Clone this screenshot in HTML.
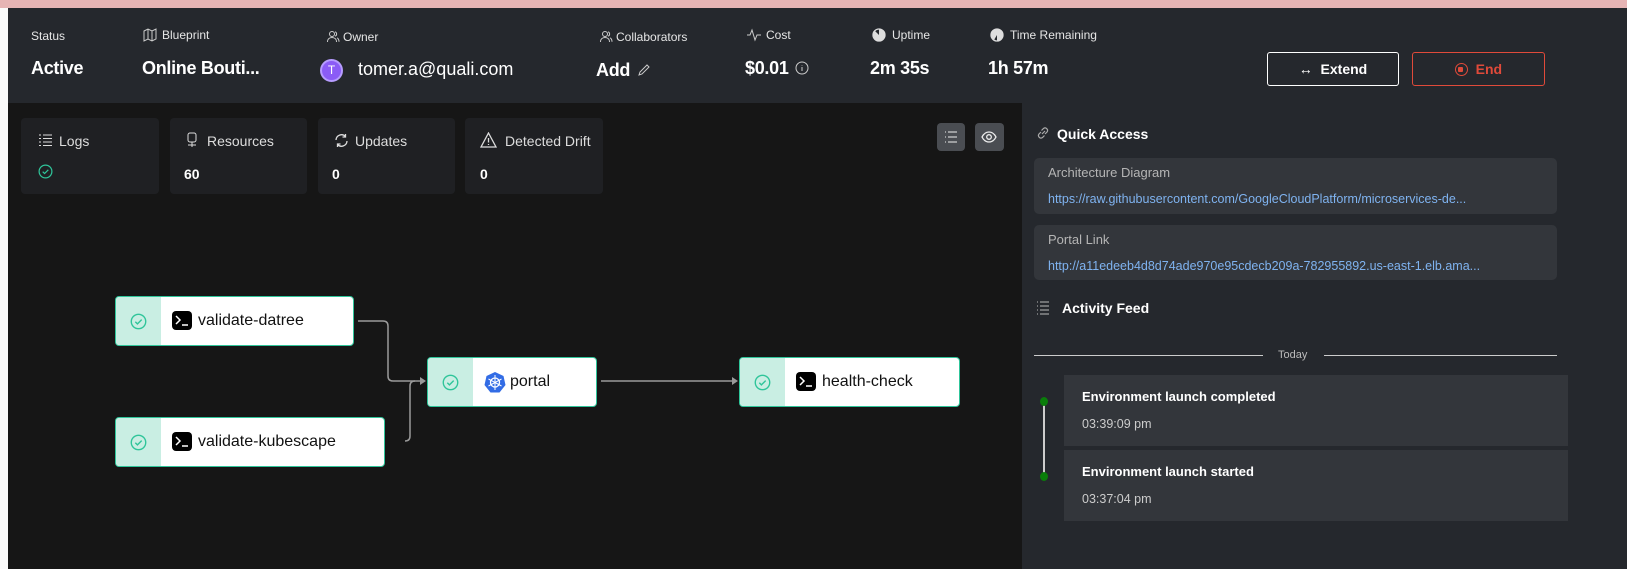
<!DOCTYPE html>
<html><head><meta charset="utf-8"><style>
*{margin:0;padding:0;box-sizing:border-box}
body{width:1627px;height:569px;overflow:hidden;background:#fafafa;font-family:"Liberation Sans",sans-serif;position:relative;color:#fff}
.a{position:absolute}
.lbl{font-size:12px;color:#e6e6e6;white-space:nowrap}
.val{font-size:18px;font-weight:bold;white-space:nowrap;letter-spacing:-0.3px}
.card{background:#1f2023;border-radius:4px}
.ct{font-size:14px;color:#ddd}
.cv{font-size:14px;font-weight:bold}
.qa{background:#33363b;border-radius:5px}
.qt{font-size:13px;color:#b5b5b5}
.ql{font-size:12.5px;color:#7fb3f0;white-space:nowrap}
.node{position:absolute;height:50px;background:#fff;border:1.5px solid #2fc59a;border-radius:4px;overflow:hidden}
.node .l{position:absolute;left:0;top:0;bottom:0;width:45px;background:#c9eee3}
.node .t{position:absolute;left:82px;top:0;line-height:47px;font-size:16px;color:#111}
.term{position:absolute;left:56px;top:14px;width:20px;height:19px;background:#000;border-radius:4px}
.fi{background:#33363b}
</style></head><body>
<div class="a" style="left:0;top:0;width:1627px;height:8px;background:#e6b4b4"></div>
<div class="a" style="left:8px;top:8px;width:1619px;height:95px;background:#25282d"></div>
<svg width="0" height="0" style="position:absolute"><defs>
<symbol id="chk" viewBox="0 0 16 16"><circle cx="8" cy="8" r="6.8" fill="none" stroke="#2fc59a" stroke-width="1.3"/><path d="M5 8.2l2 2 4-4" fill="none" stroke="#2fc59a" stroke-width="1.3"/></symbol>
<symbol id="usr" viewBox="0 0 14 14"><circle cx="6" cy="4" r="2.5" fill="none" stroke="#ccc"/><path d="M1.5 12c0-3 2-4.5 4.5-4.5S10.5 9 10.5 12M9 1.8a2.3 2.3 0 010 4.4M11 7.8c1.2.6 2 2 2 4" fill="none" stroke="#ccc"/></symbol>
</defs></svg>
<div class="a lbl" style="left:31px;top:29px">Status</div>
<div class="a val" style="left:31px;top:58px">Active</div>
<svg class="a" style="left:143px;top:28px" width="14" height="14" viewBox="0 0 14 14"><path d="M1 3l4-2 4 2 4-2v10l-4 2-4-2-4 2z M5 1v10 M9 3v10" fill="none" stroke="#ccc"/></svg>
<div class="a lbl" style="left:162px;top:28px">Blueprint</div>
<div class="a val" style="left:142px;top:58px">Online Bouti...</div>
<svg class="a" style="left:326px;top:30px" width="14" height="14"><use href="#usr"/></svg>
<div class="a lbl" style="left:343px;top:30px">Owner</div>
<div class="a" style="left:320px;top:59px;width:23px;height:23px;border-radius:50%;background:#8b5cf6;border:2px solid #b69cff;font-size:12px;text-align:center;line-height:19px">T</div>
<div class="a" style="left:358px;top:59px;font-size:18px;white-space:nowrap">tomer.a@quali.com</div>
<svg class="a" style="left:599px;top:30px" width="14" height="14"><use href="#usr"/></svg>
<div class="a lbl" style="left:616px;top:30px">Collaborators</div>
<div class="a val" style="left:596px;top:60px">Add</div>
<svg class="a" style="left:637px;top:63px" width="14" height="14" viewBox="0 0 14 14"><path d="M2 12l1-3 7-7 2 2-7 7z" fill="none" stroke="#ccc"/></svg>
<svg class="a" style="left:747px;top:28px" width="14" height="14" viewBox="0 0 14 14"><path d="M0 7h3l2-5 3 10 2-5h4" fill="none" stroke="#ccc"/></svg>
<div class="a lbl" style="left:766px;top:28px">Cost</div>
<div class="a val" style="left:745px;top:58px">$0.01</div>
<svg class="a" style="left:795px;top:61px" width="14" height="14" viewBox="0 0 14 14"><circle cx="7" cy="7" r="6" fill="none" stroke="#ccc"/><path d="M7 6v4M7 4v.5" stroke="#ccc"/></svg>
<svg class="a" style="left:872px;top:28px" width="14" height="14" viewBox="0 0 14 14"><circle cx="7" cy="7" r="6" fill="none" stroke="#ddd" stroke-width="1.3"/><path d="M7 1a6 6 0 010 12 6 6 0 01-4-10L7 7z" fill="#ddd"/></svg>
<div class="a lbl" style="left:892px;top:28px">Uptime</div>
<div class="a val" style="left:870px;top:58px">2m 35s</div>
<svg class="a" style="left:990px;top:28px" width="14" height="14" viewBox="0 0 14 14"><circle cx="7" cy="7" r="6" fill="none" stroke="#ddd" stroke-width="1.3"/><path d="M7 1a6 6 0 010 12z" fill="#ddd"/><path d="M7 1a6 6 0 00-3 11L7 7z" fill="#ddd"/></svg>
<div class="a lbl" style="left:1010px;top:28px">Time Remaining</div>
<div class="a val" style="left:988px;top:58px">1h 57m</div>
<div class="a" style="left:1267px;top:52px;width:132px;height:34px;border:1px solid #fff;border-radius:3px;font-size:14px;font-weight:bold;text-align:center;line-height:32px">↔&nbsp; Extend</div>
<div class="a" style="left:1412px;top:52px;width:133px;height:34px;border:1px solid #e04a3a;border-radius:3px;font-size:14px;font-weight:bold;color:#e04a3a;text-align:center;line-height:32px"><span style="display:inline-block;width:13px;height:13px;border:1.5px solid #e04a3a;border-radius:50%;vertical-align:-2px;position:relative"><span style="position:absolute;left:2.5px;top:2.5px;width:5px;height:5px;background:#e04a3a;border-radius:1px"></span></span>&nbsp; End</div>

<div class="a" style="left:8px;top:103px;width:1014px;height:466px;background:#161616"></div>
<div class="a card" style="left:21px;top:118px;width:138px;height:76px"></div>
<div class="a card" style="left:170px;top:118px;width:137px;height:76px"></div>
<div class="a card" style="left:318px;top:118px;width:137px;height:76px"></div>
<div class="a card" style="left:465px;top:118px;width:138px;height:76px"></div>
<svg class="a" style="left:38px;top:133px" width="15" height="15" viewBox="0 0 15 15"><path d="M1 2h2M5 2h9M1 5.5h2M5 5.5h9M1 9h2M5 9h9M1 12.5h2M5 12.5h9" stroke="#ddd"/></svg>
<div class="a ct" style="left:59px;top:133px">Logs</div>
<svg class="a" style="left:38px;top:164px" width="15" height="15"><use href="#chk"/></svg>
<svg class="a" style="left:186px;top:132px" width="13" height="16" viewBox="0 0 13 16"><rect x="2" y="1" width="8" height="9" rx="2" fill="none" stroke="#ddd"/><path d="M6 10v5M2 13h8" stroke="#ddd"/></svg>
<div class="a ct" style="left:207px;top:133px">Resources</div>
<div class="a cv" style="left:184px;top:166px">60</div>
<svg class="a" style="left:334px;top:133px" width="15" height="15" viewBox="0 0 15 15"><path d="M2 7a5.5 5.5 0 019.5-3.5M13 8a5.5 5.5 0 01-9.5 3.5M11.5 1v3h-3M3.5 14v-3h3" fill="none" stroke="#ddd" stroke-width="1.3"/></svg>
<div class="a ct" style="left:355px;top:133px">Updates</div>
<div class="a cv" style="left:332px;top:166px">0</div>
<svg class="a" style="left:480px;top:132px" width="17" height="16" viewBox="0 0 17 16"><path d="M8.5 1L16 15H1z" fill="none" stroke="#ddd" stroke-width="1.3"/><path d="M8.5 6v4.5M8.5 12v1" stroke="#ddd" stroke-width="1.3"/></svg>
<div class="a ct" style="left:505px;top:133px">Detected Drift</div>
<div class="a cv" style="left:480px;top:166px">0</div>
<div class="a" style="left:937px;top:123px;width:28px;height:28px;background:#4a4d52;border-radius:4px"></div>
<svg class="a" style="left:944px;top:131px" width="14" height="12" viewBox="0 0 14 12"><path d="M1 1h1M4 1h9M1 6h1M4 6h9M1 11h1M4 11h9" stroke="#eee"/></svg>
<div class="a" style="left:975px;top:123px;width:29px;height:28px;background:#4a4d52;border-radius:4px"></div>
<svg class="a" style="left:981px;top:130px" width="16" height="14" viewBox="0 0 16 14"><path d="M1 7c2-4 5-5 7-5s5 1 7 5c-2 4-5 5-7 5s-5-1-7-5z" fill="none" stroke="#eee" stroke-width="1.3"/><circle cx="8" cy="7" r="2.3" fill="none" stroke="#eee" stroke-width="1.3"/></svg>

<svg class="a" style="left:0;top:0" width="1022" height="569">
<path d="M358 321H383q5 0 5 5V376q0 5 5 5H420" fill="none" stroke="#9a9a9a" stroke-width="1.5"/>
<path d="M405 441q5 0 5-5V386q0-5 5-5" fill="none" stroke="#9a9a9a" stroke-width="1.5"/>
<path d="M420 377l6 4-6 4z" fill="#9a9a9a"/>
<path d="M601 381H732" stroke="#9a9a9a" stroke-width="1.5"/>
<path d="M732 377l6 4-6 4z" fill="#9a9a9a"/>
</svg>
<div class="node" style="left:115px;top:296px;width:239px"><div class="l"></div><svg class="a" style="left:14px;top:16px" width="17" height="17"><use href="#chk"/></svg><div class="term"><svg width="20" height="19"><path d="M4 5l4 4-4 4M10 14h6" fill="none" stroke="#fff" stroke-width="1.5"/></svg></div><div class="t">validate-datree</div></div>
<div class="node" style="left:115px;top:417px;width:270px"><div class="l"></div><svg class="a" style="left:14px;top:16px" width="17" height="17"><use href="#chk"/></svg><div class="term"><svg width="20" height="19"><path d="M4 5l4 4-4 4M10 14h6" fill="none" stroke="#fff" stroke-width="1.5"/></svg></div><div class="t">validate-kubescape</div></div>
<div class="node" style="left:427px;top:357px;width:170px"><div class="l"></div><svg class="a" style="left:14px;top:16px" width="17" height="17"><use href="#chk"/></svg><svg class="a" style="left:56px;top:13px" width="22" height="22" viewBox="0 0 22 22"><path d="M11 1l8.5 4 2 9-6 7.5h-9l-6-7.5 2-9z" fill="#326ce5"/><circle cx="11" cy="11.5" r="4.5" fill="none" stroke="#fff" stroke-width="1.3"/><path d="M11 4v15M4.5 8l13 7M17.5 8l-13 7" stroke="#fff" stroke-width="1"/></svg><div class="t" style="left:82px">portal</div></div>
<div class="node" style="left:739px;top:357px;width:221px"><div class="l"></div><svg class="a" style="left:14px;top:16px" width="17" height="17"><use href="#chk"/></svg><div class="term"><svg width="20" height="19"><path d="M4 5l4 4-4 4M10 14h6" fill="none" stroke="#fff" stroke-width="1.5"/></svg></div><div class="t">health-check</div></div>

<div class="a" style="left:1022px;top:103px;width:605px;height:466px;background:#25282d"></div>
<svg class="a" style="left:1036px;top:126px" width="14" height="14" viewBox="0 0 14 14"><path d="M6 8l3-3M5 6L3 8a2.5 2.5 0 003.5 3.5L8.5 9.5M9 8l2-2a2.5 2.5 0 00-3.5-3.5L5.5 4.5" fill="none" stroke="#aaa" stroke-width="1.2"/></svg>
<div class="a" style="left:1057px;top:126px;font-size:14px;font-weight:bold">Quick Access</div>
<div class="a qa" style="left:1034px;top:158px;width:523px;height:56px"></div>
<div class="a qt" style="left:1048px;top:165px">Architecture Diagram</div>
<div class="a ql" style="left:1048px;top:192px">https://raw.githubusercontent.com/GoogleCloudPlatform/microservices-de...</div>
<div class="a qa" style="left:1034px;top:225px;width:523px;height:55px"></div>
<div class="a qt" style="left:1048px;top:232px">Portal Link</div>
<div class="a ql" style="left:1048px;top:259px">http://a11edeeb4d8d74ade970e95cdecb209a-782955892.us-east-1.elb.ama...</div>
<svg class="a" style="left:1036px;top:301px" width="14" height="14" viewBox="0 0 14 14"><path d="M1 1h1M4 1h9M1 5h1M4 5h9M1 9h1M4 9h9M1 13h1M4 13h9" stroke="#bbb"/></svg>
<div class="a" style="left:1062px;top:300px;font-size:14px;font-weight:bold">Activity Feed</div>
<div class="a" style="left:1034px;top:355px;width:229px;height:1px;background:#ccc"></div>
<div class="a" style="left:1324px;top:355px;width:233px;height:1px;background:#ccc"></div>
<div class="a" style="left:1278px;top:349px;font-size:11px;color:#bbb">Today</div>
<div class="a fi" style="left:1064px;top:375px;width:504px;height:71px"></div>
<div class="a fi" style="left:1064px;top:450px;width:504px;height:71px"></div>
<div class="a" style="left:1082px;top:389px;font-size:13px;font-weight:bold">Environment launch completed</div>
<div class="a" style="left:1082px;top:417px;font-size:12.5px;color:#ccc">03:39:09 pm</div>
<div class="a" style="left:1082px;top:464px;font-size:13px;font-weight:bold">Environment launch started</div>
<div class="a" style="left:1082px;top:492px;font-size:12.5px;color:#ccc">03:37:04 pm</div>
<div class="a" style="left:1043px;top:405px;width:2px;height:68px;background:#ccc"></div>
<div class="a" style="left:1040px;top:397px;width:8px;height:9px;border-radius:50%;background:#0a7d0a"></div>
<div class="a" style="left:1040px;top:472px;width:8px;height:9px;border-radius:50%;background:#0a7d0a"></div>
</body></html>
